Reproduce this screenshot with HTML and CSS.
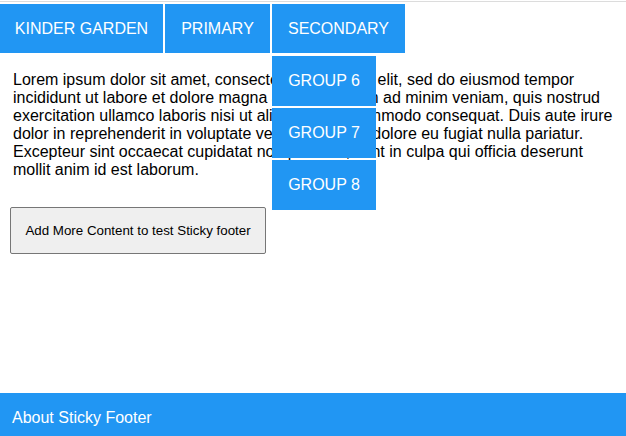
FILE: index.html
```html
<!DOCTYPE html>
<html>
<head>
<meta charset="utf-8">
<link rel="stylesheet" href="styles.css">
</head>
<body>
<div class="page">
  <header class="header">
    <nav class="nav">
      <div class="nav-item nav-kg">KINDER GARDEN</div>
      <div class="nav-item nav-primary">PRIMARY</div>
      <div class="nav-item nav-secondary">SECONDARY
        <div class="dropdown">
          <div class="dropdown-item">GROUP 6</div>
          <div class="dropdown-item">GROUP 7</div>
          <div class="dropdown-item">GROUP 8</div>
        </div>
      </div>
    </nav>
  </header>
  <main class="content">
    <p class="text">Lorem ipsum dolor sit amet, consectetur adipiscing elit, sed do eiusmod tempor incididunt ut labore et dolore magna aliqua. Ut enim ad minim veniam, quis nostrud exercitation ullamco laboris nisi ut aliquip ex ea commodo consequat. Duis aute irure dolor in reprehenderit in voluptate velit esse cillum dolore eu fugiat nulla pariatur. Excepteur sint occaecat cupidatat non proident, sunt in culpa qui officia deserunt mollit anim id est laborum.</p>
    <button class="btn" type="button">Add More Content to test Sticky footer</button>
  </main>
  <footer class="footer">About Sticky Footer</footer>
</div>
</body>
</html>
```
FILE: styles.css
```css
html, body {
  margin: 0;
  padding: 0;
  height: 100%;
}
body {
  font-family: "Liberation Sans", Arial, sans-serif;
  font-size: 16px;
  color: #000;
  background: #fff;
}
.page {
  min-height: 100vh;
  display: flex;
  flex-direction: column;
}
.header {
  border-top: 1px solid #dcdcdc;
  margin-top: 1px;
  padding-top: 2px;
}
.nav {
  display: flex;
  gap: 2px;
}
.nav-item {
  position: relative;
  height: 49px;
  line-height: 49px;
  background: #2196f3;
  color: #fff;
  text-align: center;
  white-space: nowrap;
}
.nav-kg { width: 163px; }
.nav-primary { width: 105px; }
.nav-secondary { width: 133px; }
.dropdown {
  position: absolute;
  top: 52px;
  left: 0;
  width: 104px;
  display: flex;
  flex-direction: column;
  gap: 2px;
  z-index: 2;
}
.dropdown-item {
  height: 50px;
  line-height: 50px;
  background: #2196f3;
  color: #fff;
  text-align: center;
}
.content {
  flex: 1;
  padding: 0 10px;
}
.text {
  margin: 18px 0 0;
  padding: 0 3px;
  line-height: normal;
}
.btn {
  margin-top: 28px;
  width: 256px;
  height: 47px;
  padding: 0;
  font-family: "Liberation Sans", Arial, sans-serif;
  font-size: 13.333px;
  color: #000;
  background: #efefef;
  border: 1px solid #767676;
  border-radius: 2px;
}
.footer {
  height: 43px;
  box-sizing: border-box;
  padding: 16px 12px 0;
  background: #2196f3;
  color: #fff;
  line-height: normal;
}
```
